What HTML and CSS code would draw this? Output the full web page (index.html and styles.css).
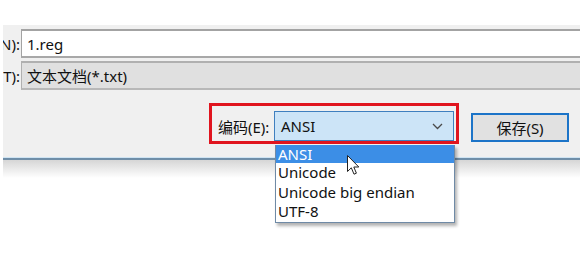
FILE: index.html
```html
<!DOCTYPE html>
<html lang="zh-CN">
<head>
<meta charset="utf-8">
<title>另存为</title>
<link rel="stylesheet" href="styles.css">
</head>
<body>
<div class="window">
  <div class="row">
    <div class="label"><span>文件名(N):</span></div>
    <div class="field field-name">1.reg</div>
  </div>
  <div class="row row-type">
    <div class="label"><span>保存类型(T):</span></div>
    <div class="field field-type">文本文档(*.txt)</div>
  </div>
  <div class="row row-actions">
    <div class="highlight">
      <span class="enc-label">编码(E):</span>
      <div class="combo">
        <span>ANSI</span>
        <svg class="chevron" width="11" height="7" viewBox="0 0 11 7"><polyline points="1,1 5.5,5.5 10,1" fill="none" stroke="#4a4a4a" stroke-width="1.3"/></svg>
      </div>
    </div>
    <div class="button">保存(S)</div>
  </div>
</div>
<div class="window-edge"></div>
<div class="window-shadow"></div>

<ul class="dropdown">
  <li class="selected">ANSI</li>
  <li>Unicode</li>
  <li>Unicode big endian</li>
  <li>UTF-8</li>
</ul>

<svg class="cursor" width="13" height="21" viewBox="0 0 13 21"><path d="M0.5,0.5 L0.5,16.5 L4.3,12.8 L7,19.2 L9.4,18.2 L6.8,12 L11.8,12 Z" fill="#fff" stroke="#222" stroke-width="1" stroke-linejoin="round"/></svg>
</body>
</html>
```

FILE: styles.css
```css
html, body {
  margin: 0;
  padding: 0;
  background: #ffffff;
}

body {
  width: 580px;
  height: 258px;
  overflow: hidden;
  position: relative;
  font-family: "Noto Sans", "Noto Sans CJK SC", sans-serif;
  font-size: 15px;
  color: #111;
}

.window {
  margin: 25px 0 0 3px;
  height: 132px;
  box-sizing: border-box;
  padding-top: 4px;
  background: #f0f0f0;
  overflow: hidden;
}

.row {
  display: flex;
  height: 29px;
}

.row-type {
  margin-top: 3px;
}

.label {
  width: 18px;
  flex: none;
  display: flex;
  justify-content: flex-end;
  align-items: center;
  overflow: hidden;
  white-space: nowrap;
  padding-right: 1px;
  box-sizing: border-box;
}

.field {
  flex: 1;
  display: flex;
  align-items: center;
  padding-left: 5px;
  margin-right: -10px;
  box-sizing: border-box;
  white-space: nowrap;
}

.field-name {
  background: #ffffff;
  border-top: 2px solid #a3a3a3;
  border-bottom: 2px solid #a8a8a8;
  border-left: 1px solid #a3a3a3;
}

.field-type {
  background: #e0e0e0;
  border-top: 2px solid #b0b0b0;
  border-bottom: 2px solid #b8b8b8;
  border-left: 1px solid #b0b0b0;
}

.row-actions {
  margin-top: 13px;
  height: 41px;
  align-items: flex-start;
}

.highlight {
  margin-left: 206px;
  width: 250px;
  height: 41px;
  box-sizing: border-box;
  border: 3px solid #e0141e;
  display: flex;
  align-items: flex-end;
  padding: 0 2px 0 6px;
}

.enc-label {
  flex: 1;
  height: 30px;
  display: flex;
  align-items: center;
  white-space: nowrap;
}

.combo {
  width: 180px;
  height: 30px;
  box-sizing: border-box;
  background: #cce4f7;
  border: 1px solid #3f7fbf;
  display: flex;
  align-items: center;
  justify-content: space-between;
  padding: 0 10px 0 6px;
}

.chevron {
  display: block;
}

.button {
  margin: 10px 0 0 12px;
  width: 98px;
  height: 29px;
  box-sizing: border-box;
  border: 2px solid #1c74c8;
  background: #e1e1e1;
  display: flex;
  align-items: center;
  justify-content: center;
}

.window-edge {
  margin-left: 3px;
  height: 1px;
  background: #cfe4f3;
  border-bottom: 2px solid #6f8ea8;
}

.window-shadow {
  margin-left: 3px;
  height: 18px;
  background: linear-gradient(#d6d6d6, #ffffff);
}

.dropdown {
  position: absolute;
  left: 275px;
  top: 145px;
  width: 180px;
  margin: 0;
  padding: 0;
  list-style: none;
  box-sizing: border-box;
  background: #ffffff;
  border: 1px solid #6f8aa6;
  border-top: none;
  box-shadow: 2px 3px 3px rgba(0, 0, 0, 0.3);
}

.dropdown li {
  height: 19.5px;
  line-height: 19px;
  padding-left: 2px;
  white-space: nowrap;
}

.dropdown li.selected {
  background: #3c8ee6;
  color: #ffffff;
  height: 18px;
  line-height: 18px;
}

.cursor {
  position: absolute;
  left: 347px;
  top: 155px;
}
```
